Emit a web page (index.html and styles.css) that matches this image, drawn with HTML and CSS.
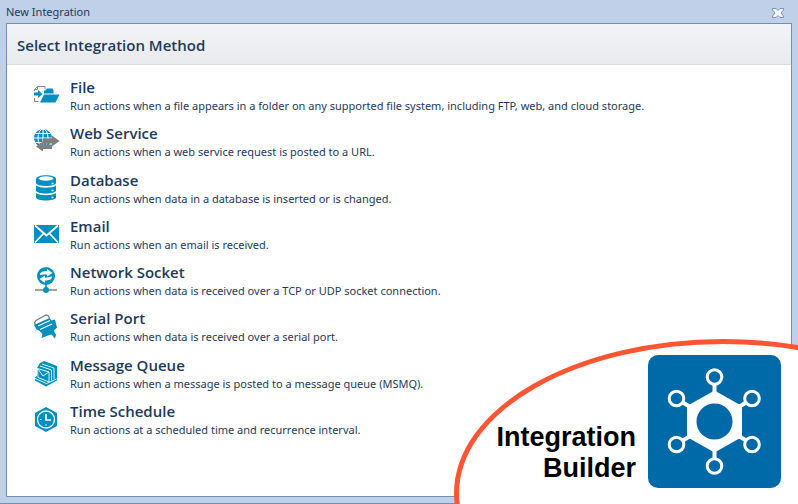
FILE: index.html
```html
<!DOCTYPE html>
<html lang="en">
<head>
    <meta charset="UTF-8">
    <meta name="viewport" content="width=device-width, initial-scale=1.0">
    <title>New Integration</title>
    <link rel="stylesheet" href="styles.css">
</head>
<body>
    <div class="window">
        <div class="title-bar">
            <span>New Integration</span>
            <button type="button" class="close-btn" aria-label="Close">
                <svg width="12" height="10" viewBox="0 0 12 10">
                    <path d="M.5.5h3.500l2 2 2-2h3.500v1.500l-2.500 3 2.500 3v1.500h-3.500l-2-2-2 2h-3.500v-1.500l2.500-3-2.500-3z" fill="#f4f5f8" stroke="#7191b8"/>
                </svg>
            </button>
        </div>

        <main class="panel">
            <h1 class="header">Select Integration Method</h1>
            <ul class="methods">
                <li>
                    <a href="#file" class="method">
                        <svg class="icon" viewBox="0 0 28 28">
                            <path d="M2.500 10V8.500L5.500 5.500h7.500v3M2.500 17v3.500h4" fill="none" stroke="#858585"/>
                            <path d="M5.500 5.500v3h-3" fill="none" stroke="#858585"/>
                            <path d="M2 11.500h4V9l4.500 4-4.500 4v-2.500H2z"/>
                            <path d="M12 12.500V9.500h1.500L15 7.500h5.500l1 2v3z"/>
                            <path d="M12 13.500h15.500L23.500 21.500H8z"/>
                        </svg>
                        <span class="text">
                            <span class="name">File</span>
                            <span class="description">Run actions when a file appears in a folder on any supported file system, including FTP, web, and cloud storage.</span>
                        </span>
                    </a>
                </li>
                <li>
                    <a href="#web-service" class="method">
                        <svg class="icon" viewBox="0 0 28 28">
                            <circle cx="11" cy="11" r="9"/>
                            <path d="M11 2v18M2 11h18M3.500 6.500h15M3.500 15.500h15" stroke="#fff" fill="none"/>
                            <ellipse cx="11" cy="11" rx="5" ry="9" stroke="#fff" fill="none"/>
                            <path d="M11 11.500h9V8.500l7.500 5.500-7.500 5.500v-3H11z" fill="#7f7f7f"/>
                            <path d="M20 17.500h-9V14.500L4 19.500l7 5v-2.500h9z" fill="#7f7f7f"/>
                        </svg>
                        <span class="text">
                            <span class="name">Web Service</span>
                            <span class="description">Run actions when a web service request is posted to a URL.</span>
                        </span>
                    </a>
                </li>
                <li>
                    <a href="#database" class="method">
                        <svg class="icon" viewBox="0 0 28 28">
                            <path d="M4 5c0-5 20-5 20 0v4c0 4-20 4-20 0z"/>
                            <ellipse cx="14" cy="4.500" rx="7.500" ry="2.200" fill="#fff"/>
                            <path d="M4 11.500c4 3 16 3 20 0v5c0 4-20 4-20 0z"/>
                            <path d="M4 19c4 3 16 3 20 0v4.500c0 4-20 4-20 0z"/>
                            <path d="M19.500 9.500h2M19.500 16.500h2M19.500 23.500h2" stroke="#fff" stroke-width="1.500"/>
                        </svg>
                        <span class="text">
                            <span class="name">Database</span>
                            <span class="description">Run actions when data in a database is inserted or is changed.</span>
                        </span>
                    </a>
                </li>
                <li>
                    <a href="#email" class="method">
                        <svg class="icon" viewBox="0 0 28 28">
                            <path d="M2 5h25v18H2z"/>
                            <path d="M3 5.500l11.500 10L26 5.500M3 22.500l8.500-9M26 22.500l-8.500-9" fill="none" stroke="#fff" stroke-width="1.800"/>
                        </svg>
                        <span class="text">
                            <span class="name">Email</span>
                            <span class="description">Run actions when an email is received.</span>
                        </span>
                    </a>
                </li>
                <li>
                    <a href="#network-socket" class="method">
                        <svg class="icon" viewBox="0 0 28 28">
                            <path d="M3 24h22" stroke="#8a8a8a" stroke-width="1.600"/>
                            <circle cx="14" cy="10" r="9"/>
                            <path d="M14 18v6" stroke="#0090bf" stroke-width="1.600"/>
                            <circle cx="14" cy="24" r="3"/>
                            <path d="M8 9c0-3 3-4 7-4V3l5.500 4-5.500 3.500V8.500c-3 0-4 0-7 .5z" fill="#fff"/>
                            <path d="M20 10.500c0 3-3 4-7 4v2.500L7.500 13 13 9.500V11.500c3 0 4-.5 7-1z" fill="#fff"/>
                        </svg>
                        <span class="text">
                            <span class="name">Network Socket</span>
                            <span class="description">Run actions when data is received over a TCP or UDP socket connection.</span>
                        </span>
                    </a>
                </li>
                <li>
                    <a href="#serial-port" class="method">
                        <svg class="icon" viewBox="0 0 28 28">
                            <path d="M3.500 13L2.500 10.500 4 8.500 14 3l2 .5 1.500 2.500" fill="none" stroke="#7f7f7f" stroke-width="1.300"/>
                            <path d="M2 13L17.500 6l2 2.500 3.500-1 2 8-3 3 .5 2 1.500 2-1 4-3.500-4-2 .5-4 1.500-4 1.500 1-4-3.500-3.500-2.500-1z"/>
                            <path d="M6 14l12-5.500M8 17.500l12-5.500" stroke="#fff" stroke-width="1.200"/>
                        </svg>
                        <span class="text">
                            <span class="name">Serial Port</span>
                            <span class="description">Run actions when data is received over a serial port.</span>
                        </span>
                    </a>
                </li>
                <li>
                    <a href="#message-queue" class="method">
                        <svg class="icon" viewBox="0 0 28 28">
                            <path d="M12 2l13 5v14.500L14 27.500 3 21.500v-3L5 17V9l3-5z"/>
                            <path d="M5.500 9.500L17 13v10L6 18.500zM5.500 9.500l5.500 7.500L17 13M8 7l11.500 4v10.500M10 5l12 4v11M3 19.500l11.500 5 10-4.500" fill="none" stroke="#fff" stroke-width=".9"/>
                        </svg>
                        <span class="text">
                            <span class="name">Message Queue</span>
                            <span class="description">Run actions when a message is posted to a message queue (MSMQ).</span>
                        </span>
                    </a>
                </li>
                <li>
                    <a href="#time-schedule" class="method">
                        <svg class="icon" viewBox="0 0 28 28">
                            <path d="M14 2l11 6v13l-11 6-11-6V8z"/>
                            <circle cx="14" cy="14.500" r="8.500" fill="none" stroke="#fff" stroke-width="1.300"/>
                            <path d="M14 9v6h5" fill="none" stroke="#fff" stroke-width="1.600"/>
                            <path d="M8 14.500h1.500M14 19v1.500" stroke="#fff"/>
                        </svg>
                        <span class="text">
                            <span class="name">Time Schedule</span>
                            <span class="description">Run actions at a scheduled time and recurrence interval.</span>
                        </span>
                    </a>
                </li>
            </ul>
        </main>

        <div class="badge">
            <div class="badge-label">Integration<br>Builder</div>
            <svg class="logo" viewBox="0 0 133 133">
                <rect width="133" height="133" rx="10" fill="#0069a7"/>
                <g fill="none" stroke="#fff" stroke-width="4">
                    <path d="M66.500 29v75M34 47l65 39M99 47L34 86"/>
                </g>
                <path d="M66.500 35.500L94 51v31L66.500 97.500 39 82V51z" fill="#fff"/>
                <circle cx="66.500" cy="66.500" r="18" fill="#0069a7"/>
                <g fill="#0069a7" stroke="#fff" stroke-width="3">
                    <circle cx="66.500" cy="22" r="7.300"/>
                    <circle cx="28.500" cy="43.500" r="7.300"/>
                    <circle cx="104" cy="43.500" r="7.300"/>
                    <circle cx="28.500" cy="89.500" r="7.300"/>
                    <circle cx="104" cy="89.500" r="7.300"/>
                    <circle cx="66.500" cy="111" r="7.300"/>
                </g>
            </svg>
        </div>
    </div>
</body>
</html>
```

FILE: styles.css
```css
* {
    box-sizing: border-box;
}
body {
    margin: 0;
    font-family: "Segoe UI", "Noto Sans", sans-serif;
    font-size: 11px;
    color: #1e395b;
}
.window {
    position: relative;
    display: flex;
    flex-direction: column;
    min-height: 100vh;
    padding: 0 6px 7px;
    background-color: #bfd0e8;
    box-shadow: inset 0 -1px #6f8fb5;
    overflow: hidden;
}
.title-bar {
    display: flex;
    justify-content: space-between;
    align-items: center;
    height: 23px;
    padding: 0 8px 0 0;
}
.close-btn {
    display: flex;
    padding: 2px 0 0;
    border: none;
    background: none;
    cursor: pointer;
}
.panel {
    flex: 1;
    background-color: #fff;
    border: 1px solid #6f8fb5;
}
.header, .name {
    font-family: "Segoe UI", "Open Sans", sans-serif;
    font-size: 15px;
    font-weight: 600;
}
.header {
    margin: 0;
    padding: 0 10px;
    line-height: 42px;
    height: 41px;
    background: linear-gradient(#f3f4f8, #e9eaee);
    border-bottom: 1px solid #dcdce2;
}
.methods {
    display: grid;
    grid-template-rows: repeat(8, 1fr);
    height: 377px;
    list-style: none;
    margin: 0;
    padding: 7px 0 0 25px;
}
.method {
    display: flex;
    align-items: center;
    gap: 10px;
    height: 46px;
    color: inherit;
    text-decoration: none;
}
.icon {
    flex: none;
    width: 28px;
    height: 28px;
    fill: #0090bf;
}
.text {
    padding-top: 2px;
}
.name, .description {
    display: block;
}
.name {
    line-height: 20px;
}
.description {
    line-height: 18px;
}
.badge {
    position: absolute;
    right: 0;
    bottom: 0;
    display: flex;
    justify-content: flex-end;
    align-items: center;
    gap: 12px;
    width: 344px;
    height: 165px;
    padding: 0 17px 0 0;
    overflow: hidden;
}
/* the ellipse runs off the corner of the window */
.badge::before {
    content: "";
    position: absolute;
    left: 0;
    top: 0;
    width: 528px;
    height: 298px;
    background-color: #fff;
    border: 5px solid #ff5533;
    border-radius: 50%;
}
.badge-label {
    position: relative;
    font-family: Arial, "Liberation Sans", sans-serif;
    font-size: 27px;
    font-weight: bold;
    line-height: 31px;
    text-align: right;
    color: #000;
    padding-top: 67px;
    height: 133px;
}
.logo {
    position: relative;
    width: 133px;
    height: 133px;
}
```
